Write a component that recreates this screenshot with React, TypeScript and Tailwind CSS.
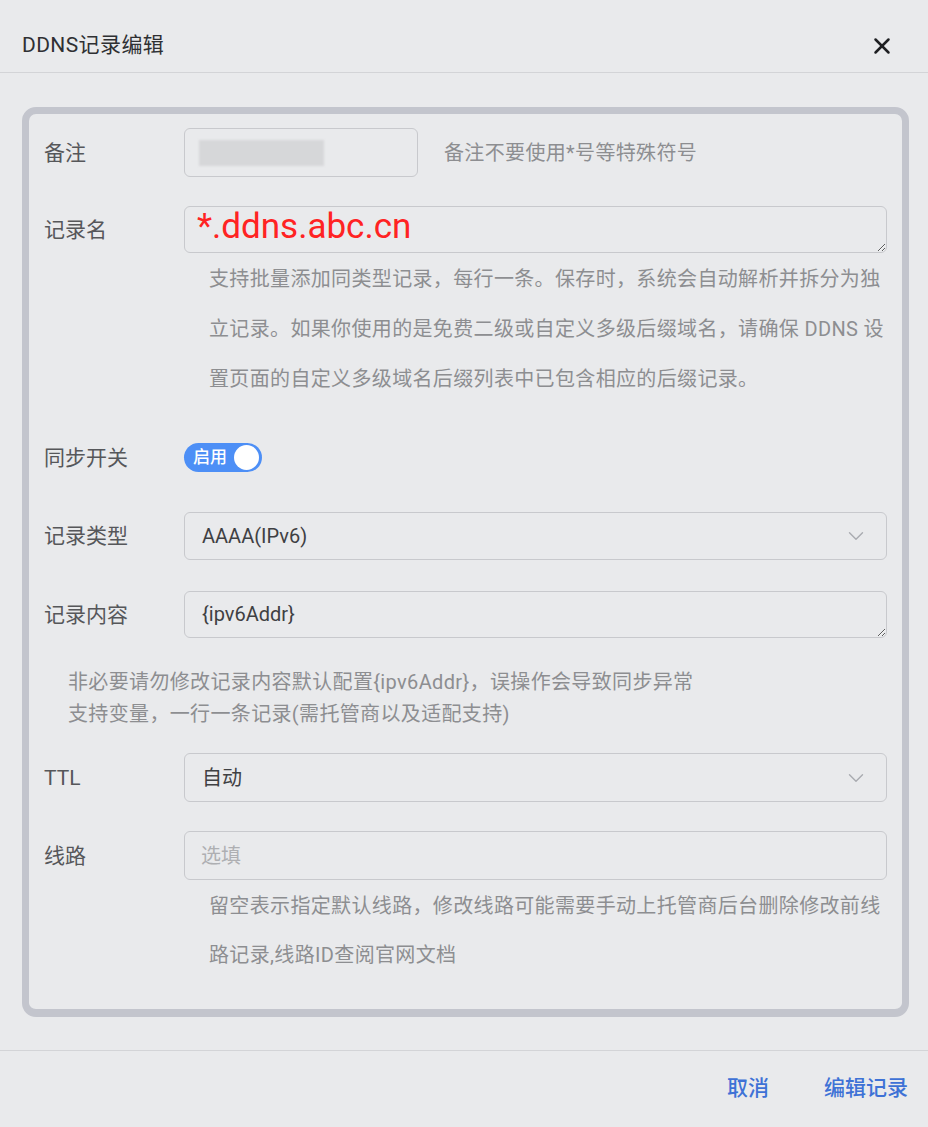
import { ChevronDown, X } from 'lucide-react'

const hint = 'text-[20px] tracking-[0.35px] text-[#8d8e91]'
const label = 'w-[140px] shrink-0 text-[21px] leading-[28px] text-[#56575a]'
const field =
  'border-[1.5px] border-[#c8c9cd] rounded-[6px] bg-[#e9eaec] text-[20px] text-[#3f4043]'

export default function App() {
  return (
    <div className="min-h-screen bg-[#e9eaec] font-[Roboto,'Noto_Sans_CJK_SC',sans-serif]">
      <div className="h-[73px] pt-[20px] pl-[22px] pr-[33px] flex items-center justify-between border-b-[1.5px] border-[#d3d4d7]">
        <span className="text-[21px] tracking-[0.4px] text-[#2f3033]">DDNS记录编辑</span>
        <X className="w-[26px] h-[26px] text-[#1f2023]" strokeWidth={2.3} />
      </div>

      <div className="ml-[22px] mt-[34px] w-[887px] border-[7px] border-b-[8px] border-[#c3c5cd] rounded-[14px] pt-[14px] pb-[29px] pl-[15px] pr-[15px]">
        {/* 备注 */}
        <div className="flex items-center">
          <span className={label}>备注</span>
          <div className={`${field} w-[234px] h-[49px] flex items-center`}>
            <div className="ml-[14px] w-[125px] h-[26px] bg-[#d6d7d9] blur-[1px]" />
          </div>
          <span className={`${hint} ml-[26px]`}>备注不要使用*号等特殊符号</span>
        </div>

        {/* 记录名 */}
        <div className="flex items-center mt-[29px]">
          <span className={label}>记录名</span>
          <textarea
            readOnly
            defaultValue="*.ddns.abc.cn"
            className={`${field} flex-1 h-[47px] pl-[12px] pt-0 leading-[40px] !text-[35px] !text-[#ff2323] outline-none overflow-hidden`}
          />
        </div>
        <div className={`${hint} pl-[165px] leading-[50px] mt-px`}>
          <div>支持批量添加同类型记录，每行一条。保存时，系统会自动解析并拆分为独</div>
          <div>立记录。如果你使用的是免费二级或自定义多级后缀域名，请确保 DDNS 设</div>
          <div>置页面的自定义多级域名后缀列表中已包含相应的后缀记录。</div>
        </div>

        {/* 同步开关 */}
        <div className="flex items-center mt-[39px]">
          <span className={label}>同步开关</span>
          <div className="w-[78px] h-[29px] rounded-full bg-[#4d8ff6] flex items-center pl-[9px] pr-[3px] justify-between">
            <span className="text-[17px] font-medium text-white">启用</span>
            <span className="w-[25px] h-[25px] rounded-full bg-white" />
          </div>
        </div>

        {/* 记录类型 */}
        <div className="flex items-center mt-[40px]">
          <span className={label}>记录类型</span>
          <div className={`${field} flex-1 h-[48px] flex items-center justify-between pl-[17px] pr-[17px]`}>
            <span>AAAA(IPv6)</span>
            <ChevronDown className="w-[26px] h-[26px] text-[#a9abb0]" strokeWidth={1.3} />
          </div>
        </div>

        {/* 记录内容 */}
        <div className="flex items-center mt-[31px]">
          <span className={label}>记录内容</span>
          <textarea
            readOnly
            defaultValue="{ipv6Addr}"
            className={`${field} flex-1 h-[47px] pl-[17px] pt-[8px] leading-[28px] outline-none overflow-hidden`}
          />
        </div>
        <div className={`${hint} ml-[24px] leading-[32px] mt-[28px]`}>
          <div>非必要请勿修改记录内容默认配置{'{ipv6Addr}'}，误操作会导致同步异常</div>
          <div>支持变量，一行一条记录(需托管商以及适配支持)</div>
        </div>

        {/* TTL */}
        <div className="flex items-center mt-[23px]">
          <span className={label}>TTL</span>
          <div className={`${field} flex-1 h-[49px] flex items-center justify-between pl-[17px] pr-[17px]`}>
            <span>自动</span>
            <ChevronDown className="w-[26px] h-[26px] text-[#a9abb0]" strokeWidth={1.3} />
          </div>
        </div>

        {/* 线路 */}
        <div className="flex items-center mt-[29px]">
          <span className={label}>线路</span>
          <div className={`${field} flex-1 h-[49px] flex items-center pl-[16px]`}>
            <span className="text-[#aeafb2]">选填</span>
          </div>
        </div>
        <div className={`${hint} pl-[165px] leading-[49px] mt-[2px]`}>
          <div>留空表示指定默认线路，修改线路可能需要手动上托管商后台删除修改前线</div>
          <div>路记录,线路ID查阅官网文档</div>
        </div>
      </div>

      <div className="mt-[33px] border-t-[1.5px] border-[#d3d4d7] h-[76px] flex items-center justify-end pr-[20px] gap-[55px]">
        <span className="text-[21px] font-medium text-[#3e72d6]">取消</span>
        <span className="text-[21px] font-medium text-[#3e72d6]">编辑记录</span>
      </div>
    </div>
  )
}
